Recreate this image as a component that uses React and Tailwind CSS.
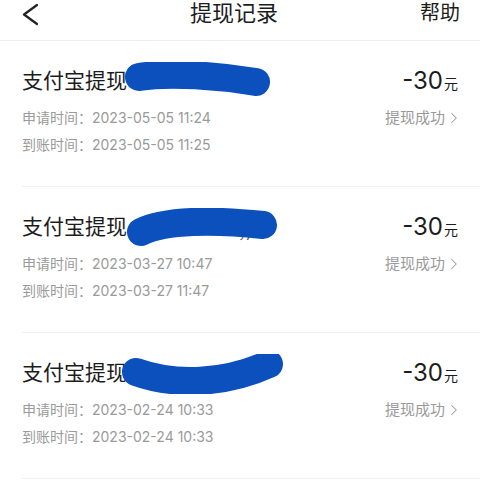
import { ChevronRight } from "lucide-react";

const records = [
  {
    apply: "2023-05-05 11:24",
    arrive: "2023-05-05 11:25",
    scribble: "M139 15 C170 10 220 14 256 20",
  },
  {
    apply: "2023-03-27 10:47",
    arrive: "2023-03-27 11:47",
    scribble: "M141 24 C165 12 215 12 263 17",
    residue: true,
  },
  {
    apply: "2023-02-24 10:33",
    arrive: "2023-02-24 10:33",
    scribble: "M136 18 C175 32 225 30 269 10",
  },
];

const font = { fontFamily: 'Inter, "Noto Sans CJK SC", "Noto Sans", sans-serif' };

const Record = ({ item }) => (
  <div className="relative ml-[22px] flex justify-between border-b border-[#f1f1f1] pr-[22px] pt-[26px] pb-[31px]">
    <div>
      <p className="h-[28px] text-[21px] leading-[28px] text-[#1c1c1c]">支付宝提现</p>
      <p className="mt-[13px] h-[20px] text-[14px] leading-[20px] text-[#9a9a9a]">
        申请时间：{item.apply}
      </p>
      <p className="mt-[7px] h-[20px] text-[14px] leading-[20px] text-[#9a9a9a]">
        到账时间：{item.arrive}
      </p>
    </div>
    <div className="flex flex-col items-end">
      <p className="flex h-[28px] items-baseline leading-[28px] text-[#1c1c1c]">
        <span className="text-[24px]">-30</span>
        <span className="ml-[1px] text-[14px]">元</span>
      </p>
      <p className="mt-[13px] flex h-[20px] items-center text-[15px] leading-[20px] text-[#9a9a9a]">
        提现成功
        <ChevronRight size={18} strokeWidth={1.4} className="-mr-[5px]" />
      </p>
    </div>
    <svg
      className="pointer-events-none absolute left-[-22px] top-[21px]"
      width="300"
      height="40"
      viewBox="0 0 300 40"
    >
      {item.residue && (
        <text x="238" y="30" fontSize="16" fill="#555">
          ，)
        </text>
      )}
      <path
        d={item.scribble}
        fill="none"
        stroke="#0b50bd"
        strokeWidth="28"
        strokeLinecap="round"
      />
    </svg>
  </div>
);

export default function App() {
  return (
    <div className="h-[480px] w-[480px] overflow-hidden bg-white" style={font}>
      <div className="flex h-[41px] items-start justify-between border-b border-[#efefef] pl-[22px] pr-[20px]">
        <svg width="16" height="26" viewBox="0 0 16 26" className="mt-[1px]">
          <polyline points="15,4 2,13.5 15,23" fill="none" stroke="#222" strokeWidth="2.2" strokeLinecap="round" strokeLinejoin="round" />
        </svg>
        <h1 className="ml-[10px] text-[22px] leading-[26px] text-[#1c1c1c]">提现记录</h1>
        <span className="text-[20px] leading-[26px] text-[#1c1c1c]">帮助</span>
      </div>
      {records.map((r) => (
        <Record key={r.apply} item={r} />
      ))}
    </div>
  );
}
